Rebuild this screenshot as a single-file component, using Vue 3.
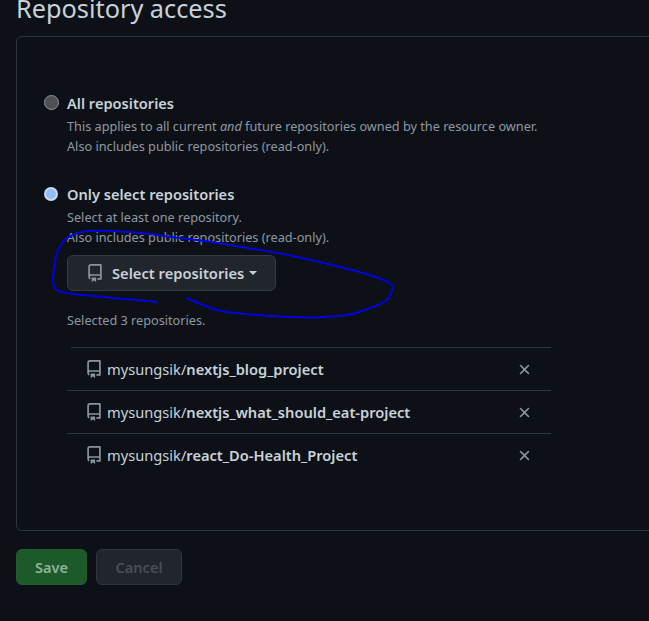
<template>
  <div class="page">
    <h2 class="title">Repository access</h2>

    <div class="box">
      <div class="option">
        <span class="radio"></span>
        <div class="option-body">
          <div class="option-label">All repositories</div>
          <p class="note">This applies to all current <em>and</em> future repositories owned by the resource owner.</p>
          <p class="note">Also includes public repositories (read-only).</p>
        </div>
      </div>

      <div class="option second">
        <span class="radio checked"></span>
        <div class="option-body">
          <div class="option-label">Only select repositories</div>
          <p class="note">Select at least one repository.</p>
          <p class="note">Also includes public repositories (read-only).</p>

          <button class="select-btn" type="button">
            <svg class="repo-icon" viewBox="0 0 16 16"><path :d="repoPath" /></svg>
            <span>Select repositories</span>
            <span class="caret"></span>
          </button>

          <p class="note selected">Selected {{ repos.length }} repositories.</p>
        </div>
      </div>

      <ul class="repo-list">
        <li v-for="(repo, index) in repos" :key="repo" class="repo-row" :class="{ first: index === 0 }">
          <svg class="repo-icon" viewBox="0 0 16 16"><path :d="repoPath" /></svg>
          <span class="repo-name">mysungsik/<strong>{{ repo }}</strong></span>
          <svg class="close-icon" viewBox="0 0 16 16"><path d="M3.72 3.72a.75.75 0 0 1 1.06 0L8 6.94l3.22-3.22a.749.749 0 1 1 1.06 1.06L9.06 8l3.22 3.22a.749.749 0 1 1-1.06 1.06L8 9.06l-3.22 3.22a.749.749 0 1 1-1.06-1.06L6.94 8 3.72 4.78a.75.75 0 0 1 0-1.06Z" /></svg>
        </li>
      </ul>
    </div>

    <div class="actions">
      <button class="btn save" type="button">Save</button>
      <button class="btn cancel" type="button">Cancel</button>
    </div>

    <!-- hand drawn marker round the button -->
    <svg class="scribble" viewBox="0 0 649 621">
      <path d="M157 302 C140 300 125 299 113 298 C95 296 78 295 67 293 C60 292 56 291 55 288 C53 284 52 280 53 277 C54 266 55 258 58 250 C61 244 63 241 67 238 C73 234 79 232 87 231 C100 230 115 231 130 232 C147 233 163 236 180 238 C197 240 213 242 230 245 C252 249 275 252 297 257 C320 262 342 267 363 273 C373 276 382 279 388 282 C391 284 393 285 393 287 C392 292 390 297 387 300 C382 304 376 306 370 308 C362 311 355 314 347 315 C330 317 313 318 297 317 C283 317 270 316 257 315 C243 314 230 313 217 310 C206 307 196 302 187 298" />
    </svg>
  </div>
</template>

<script setup>
const repoPath = 'M2 2.5A2.5 2.5 0 0 1 4.5 0h8.75a.75.75 0 0 1 .75.75v12.5a.75.75 0 0 1-.75.75h-2.5a.75.75 0 0 1 0-1.5h1.75v-2h-8a1 1 0 0 0-.714 1.7.75.75 0 1 1-1.072 1.05A2.495 2.495 0 0 1 2 11.5Zm10.5-1h-8a1 1 0 0 0-1 1v6.708A2.486 2.486 0 0 1 4.5 9h8ZM5 12.25a.25.25 0 0 1 .25-.25h3.5a.25.25 0 0 1 .25.25v3.25a.25.25 0 0 1-.4.2l-1.45-1.087a.249.249 0 0 0-.3 0L5.4 15.7a.25.25 0 0 1-.4-.2Z'

const repos = ['nextjs_blog_project', 'nextjs_what_should_eat-project', 'react_Do-Health_Project']
</script>

<style>
html, body {
  margin: 0;
  background: #0d1117;
}
</style>

<style scoped>
.page {
  position: relative;
  width: 649px;
  height: 621px;
  overflow: hidden;
  padding-left: 16px;
  box-sizing: border-box;
  background: #0d1117;
  color: #c9d1d9;
  font-family: "Noto Sans", "Open Sans", sans-serif;
}

.title {
  margin: -17px 0 0;
  height: 53px;
  font-size: 25.3px;
  font-weight: 400;
  line-height: 50px;
  color: #c9d1d9;
}

.box {
  box-sizing: border-box;
  width: 700px;
  height: 495px;
  padding: 56px 0 0 27px;
  border: 1px solid #30363d;
  border-radius: 6px;
}

.option {
  display: flex;
  gap: 8px;
}

.second {
  margin-top: 28px;
}

.radio {
  flex: none;
  box-sizing: border-box;
  width: 15px;
  height: 15px;
  margin-top: 2px;
  border: 1px solid #8b949e;
  border-radius: 50%;
  background: #4f5052;
}

.radio.checked {
  width: 14px;
  height: 14px;
  margin-top: 3px;
  margin-right: 1px;
  border: 2px solid #c9d9ee;
  background: #8fbcfb;
}

.option-label {
  height: 22px;
  margin-bottom: 1px;
  font-size: 14.6px;
  font-weight: 600;
  line-height: 21px;
}

.note {
  margin: 0;
  height: 20px;
  font-size: 12.7px;
  line-height: 20px;
  color: #8f98a2;
}

.select-btn {
  display: flex;
  align-items: center;
  box-sizing: border-box;
  width: 209px;
  height: 36px;
  margin-top: 8px;
  padding: 0 0 0 18px;
  border: 1px solid #363b42;
  border-radius: 6px;
  background: #21262d;
  color: #c9d1d9;
  font-family: inherit;
  font-size: 14.7px;
  font-weight: 600;
}

.select-btn .repo-icon {
  margin-right: 8px;
}

.caret {
  width: 0;
  height: 0;
  margin-left: 5px;
  border: 4px solid transparent;
  border-top-color: #c9d1d9;
  border-bottom: 0;
}

.selected {
  margin-top: 19px;
}

.repo-icon {
  flex: none;
  width: 18px;
  height: 18px;
  fill: #8b949e;
}

.repo-list {
  width: 484px;
  margin: 17px 0 0 23px;
  padding: 0;
  list-style: none;
}

.repo-row {
  display: flex;
  align-items: center;
  box-sizing: border-box;
  height: 43px;
  padding-left: 18px;
  border-top: 1px solid #30363d;
}

.repo-row.first {
  margin-left: 4px;
  padding-left: 14px;
}

.repo-name {
  margin-left: 4px;
  font-size: 14.65px;
}

.repo-name strong {
  font-weight: 600;
}

.close-icon {
  width: 17px;
  height: 17px;
  margin-left: auto;
  margin-right: 18px;
  fill: #8b949e;
}

.actions {
  display: flex;
  gap: 9px;
  margin-top: 18px;
}

.btn {
  box-sizing: border-box;
  height: 36px;
  border-radius: 6px;
  font-family: inherit;
  font-size: 14.6px;
  font-weight: 600;
}

.save {
  width: 71px;
  border: 1px solid #235c2d;
  background: #1c5a2a;
  color: #8db597;
}

.cancel {
  width: 86px;
  border: 1px solid #30363d;
  background: #21262d;
  color: #484f58;
}

.scribble {
  position: absolute;
  top: 0;
  left: 0;
  width: 649px;
  height: 621px;
  fill: none;
  stroke: #0000e0;
  stroke-width: 2;
  stroke-linecap: round;
  pointer-events: none;
}
</style>
